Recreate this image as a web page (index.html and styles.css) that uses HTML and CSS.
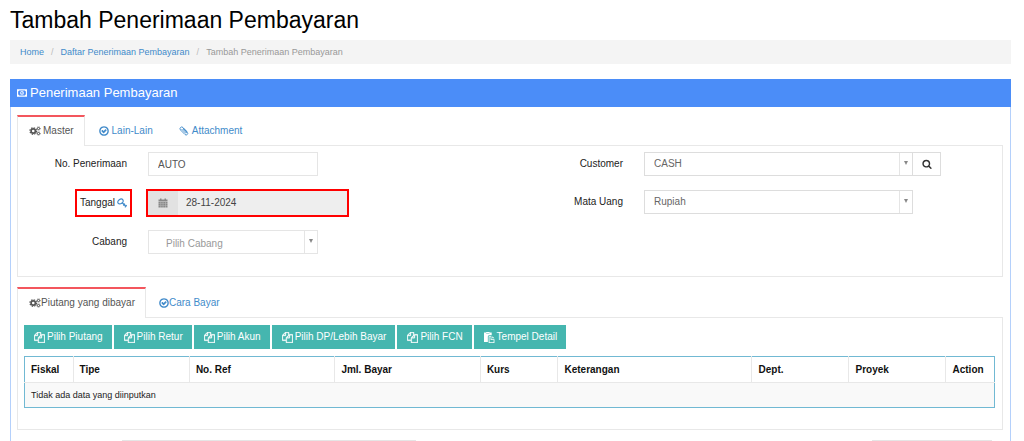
FILE: index.html
```html
<!DOCTYPE html>
<html lang="id">
<head>
<meta charset="utf-8">
<title>Tambah Penerimaan Pembayaran</title>
<link rel="stylesheet" href="styles.css">
</head>
<body>
<svg class="sprite" aria-hidden="true">
  <symbol id="i-money" viewBox="0 0 22 18"><path fill-rule="evenodd" d="M0 1h22v16H0zM4.500 3.500a2.500 2.500 0 0 1-2 2v7a2.500 2.500 0 0 1 2 2h13a2.500 2.500 0 0 1 2-2v-7a2.500 2.500 0 0 1-2-2zM11 4.500a4 4.500 0 1 1 0 9a4 4.500 0 1 1 0-9zM10.500 6L9 7.500v1h1V11H9v1h4v-1h-1V6z"/></symbol>
  <symbol id="i-cogs" viewBox="0 0 22 20"><g fill="none" stroke="currentColor"><circle cx="7.500" cy="10" r="4.300" stroke-width="3.400"/><circle cx="7.500" cy="10" r="6.600" stroke-width="2.400" stroke-dasharray="2.900 2.284"/><circle cx="18" cy="5" r="2.200" stroke-width="2"/><circle cx="18" cy="5" r="3.500" stroke-width="1.400" stroke-dasharray="1.600 1.542"/><circle cx="18" cy="15" r="2.200" stroke-width="2"/><circle cx="18" cy="15" r="3.500" stroke-width="1.400" stroke-dasharray="1.600 1.542"/></g></symbol>
  <symbol id="i-check" viewBox="100 100 1592 1592"><path d="M1299 813l-422 422q-19 19-45 19t-45-19l-294-294q-19-19-19-45t19-45l102-102q19-19 45-19t45 19l147 147 275-275q19-19 45-19t45 19l102 102q19 19 19 45t-19 45zm141 83q0-148-73-273t-198-198-273-73-273 73-198 198-73 273 73 273 198 198 273 73 273-73 198-198 73-273zm224 0q0 209-103 385.500t-279.500 279.500-385.500 103-385.500-103-279.500-279.500-103-385.500 103-385.500 279.500-279.500 385.500-103 385.500 103 279.500 279.500 103 385.500z"/></symbol>
  <symbol id="i-clip" viewBox="0 0 20 20"><path fill="none" stroke="currentColor" stroke-width="1.800" stroke-linecap="round" d="M8 4l8.500 8.500a3 3 0 0 1-4.500 4.500L3 8a3.500 3.500 0 0 1 5-5l7.500 7.500M5.500 6.500l7.500 7.500a1.300 1.300 0 0 0 1.800-1.800L8.500 6"/></symbol>
  <symbol id="i-key" viewBox="0 0 20 20"><g fill="none" stroke="currentColor" stroke-width="2.400"><ellipse cx="7" cy="7" rx="5.800" ry="4.400" transform="rotate(-35 7 7)"/><path d="M10 9l8.500 8.500M12.500 15l3.500-3.500M15.500 18.500l4-4"/></g></symbol>
  <symbol id="i-calendar" viewBox="0 0 20 20"><path fill-rule="evenodd" d="M1 3h3V1h3v2h6V1h3v2h3v4H1zM1 8h18v11H1zM5.500 8v11h.7V8zM9.700 8v11h.7V8zM14 8v11h.7V8zM1 11.500v.7h18v-.7zM1 15v.7h18V15z"/></symbol>
  <symbol id="i-search" viewBox="0 0 1792 1792"><path d="M1216 832q0-185-131.500-316.500t-316.500-131.500-316.500 131.500-131.500 316.500 131.500 316.500 316.500 131.500 316.500-131.500 131.500-316.500zm512 832q0 52-38 90t-90 38q-54 0-90-38l-343-342q-179 124-399 124-143 0-273.500-55.500t-225-150-150-225-55.500-273.500 55.500-273.500 150-225 225-150 273.500-55.500 273.500 55.500 225 150 150 225 55.500 273.500q0 220-124 399l343 343q37 37 37 90z"/></symbol>
  <symbol id="i-files" viewBox="0 0 1792 1792"><path stroke="currentColor" stroke-width="50" d="M1696 384q40 0 68 28t28 68v1216q0 40-28 68t-68 28h-960q-40 0-68-28t-28-68v-288h-544q-40 0-68-28t-28-68v-672q0-40 20-88t48-76l408-408q28-28 76-48t88-20h416q40 0 68 28t28 68v328q68-40 128-40h416zm-544 213l-299 299h299v-299zm-640-384l-299 299h299v-299zm196 647l316-316v-416h-384v416q0 40-28 68t-68 28h-416v640h512v-256q0-40 20-88t48-76zm956 804v-1152h-384v416q0 40-28 68t-68 28h-416v640h896z"/></symbol>
  <symbol id="i-paste" viewBox="0 0 20 20"><path fill-rule="evenodd" d="M0 1h4V0h6v1h4v5H8.500L7 7.500V18H0zM4 2.500v1h6v-1zM8.500 7.500h5V13H19v7H8.500zM10 9v9.500h7.500v-4H12V9zM15 7.500l4 4h-4z"/></symbol>
</svg>

<h1 class="page-title">Tambah Penerimaan Pembayaran</h1>
<nav class="breadcrumb" aria-label="Breadcrumb">
  <a href="#">Home</a><span class="sep">/</span><a href="#">Daftar Penerimaan Pembayaran</a><span class="sep">/</span><span>Tambah Penerimaan Pembayaran</span>
</nav>

<main class="portlet">
  <h2 class="portlet-title"><svg class="icon"><use href="#i-money"/></svg>Penerimaan Pembayaran</h2>
  <div class="portlet-body">
    <section>
      <nav class="tabs">
        <a class="tab active" href="#"><svg class="icon icon-wide"><use href="#i-cogs"/></svg>Master</a>
        <a class="tab" href="#"><svg class="icon"><use href="#i-check"/></svg>Lain-Lain</a>
        <a class="tab" href="#"><svg class="icon"><use href="#i-clip"/></svg>Attachment</a>
      </nav>
      <form class="tab-content master">
        <div class="column">
          <div class="field">
            <label for="no"><span class="label-text">No. Penerimaan</span></label>
            <input class="control short" id="no" value="AUTO">
          </div>
          <div class="field">
            <label for="tanggal"><span class="label-text marked">Tanggal <svg class="icon key"><use href="#i-key"/></svg></span></label>
            <div class="date marked">
              <span class="addon"><svg class="icon"><use href="#i-calendar"/></svg></span>
              <input class="date-input" id="tanggal" value="28-11-2024" readonly>
            </div>
          </div>
          <div class="field">
            <label for="cabang"><span class="label-text">Cabang</span></label>
            <div class="select short placeholder"><select class="control" id="cabang"><option>Pilih Cabang</option></select></div>
          </div>
        </div>
        <div class="column">
          <div class="field">
            <label for="customer"><span class="label-text">Customer</span></label>
            <div class="lookup">
              <div class="select long"><select class="control" id="customer"><option>CASH</option></select></div>
              <button class="search" type="button" aria-label="Cari"><svg class="icon"><use href="#i-search"/></svg></button>
            </div>
          </div>
          <div class="field">
            <label for="mata"><span class="label-text">Mata Uang</span></label>
            <div class="select long"><select class="control" id="mata"><option>Rupiah</option></select></div>
          </div>
        </div>
      </form>
    </section>

    <section>
      <nav class="tabs">
        <a class="tab tight active" href="#"><svg class="icon icon-wide"><use href="#i-cogs"/></svg>Piutang yang dibayar</a>
        <a class="tab tight" href="#"><svg class="icon"><use href="#i-check"/></svg>Cara Bayar</a>
      </nav>
      <div class="tab-content detail">
        <div class="toolbar">
          <button class="btn" type="button"><svg class="icon"><use href="#i-files"/></svg>Pilih Piutang</button>
          <button class="btn" type="button"><svg class="icon"><use href="#i-files"/></svg>Pilih Retur</button>
          <button class="btn" type="button"><svg class="icon"><use href="#i-files"/></svg>Pilih Akun</button>
          <button class="btn" type="button"><svg class="icon"><use href="#i-files"/></svg>Pilih DP/Lebih Bayar</button>
          <button class="btn" type="button"><svg class="icon"><use href="#i-files"/></svg>Pilih FCN</button>
          <button class="btn" type="button"><svg class="icon"><use href="#i-paste"/></svg>Tempel Detail</button>
        </div>
        <table class="grid">
          <colgroup><col class="w5"><col class="w12"><col class="w15"><col class="w15"><col class="w8"><col class="w20"><col class="w10"><col class="w10"><col class="w5"></colgroup>
          <thead><tr><th>Fiskal</th><th>Tipe</th><th>No. Ref</th><th>Jml. Bayar</th><th>Kurs</th><th>Keterangan</th><th>Dept.</th><th>Proyek</th><th>Action</th></tr></thead>
          <tbody><tr><td colspan="9">Tidak ada data yang diinputkan</td></tr></tbody>
        </table>
      </div>
    </section>

    <div class="summary">
      <textarea class="control note" aria-label="Catatan"></textarea>
      <input class="control total" aria-label="Total">
    </div>
  </div>
</main>
</body>
</html>
```
FILE: styles.css
```css
* { box-sizing: border-box; }

body {
  margin: 0;
  padding: 6px 13px 0 10px;
  background: #fff;
  color: #222;
  font: 10px/14px "Liberation Sans", Arial, sans-serif;
}

input, select, textarea, button { font: inherit; color: inherit; border-radius: 0; margin: 0; }
a { color: #428bca; text-decoration: none; }

.sprite { position: absolute; width: 0; height: 0; }
.icon { width: 10px; height: 10px; fill: currentColor; flex: none; }
.icon-wide { width: 12px; }

.page-title { margin: 0 0 6px; font-size: 23px; line-height: 28px; font-weight: 400; color: #000; }

.breadcrumb {
  display: flex;
  gap: 7px;
  align-items: center;
  height: 24px;
  padding: 0 10px;
  margin-bottom: 15px;
  background: #f4f4f4;
  color: #999;
  font-size: 9px;
}
.sep { color: #bbb; }

.portlet { border: 1px solid #b4d0fb; border-top: 0; }
.portlet-title {
  display: flex;
  align-items: center;
  gap: 3px;
  height: 28px;
  margin: 0 -1px;
  padding: 0 7px;
  background: #4b8df8;
  color: #fff;
  font-size: 13px;
  font-weight: 400;
}
.portlet-body { display: flex; flex-direction: column; gap: 10px; padding: 8px 7px 12px 6px; }

.tabs { display: flex; gap: 2px; }
.tab {
  display: flex;
  align-items: center;
  gap: 3px;
  height: 30px;
  padding: 0 11px;
  border: 1px solid transparent;
  border-width: 2px 1px 0;
}
.tab.tight { gap: 0; padding: 0 10px; }
.tab.active {
  height: 31px;
  margin-bottom: -1px;
  padding: 0 10px 1px 11px;
  border-color: #f3565d #e8e8e8 #fff;
  background: #fff;
  color: #555;
}
.tab.active:not(.tight) { gap: 2px; }
.tab-content { border: 1px solid #e8e8e8; }

.master { display: grid; grid-template-columns: 1fr 1fr; gap: 8px; padding: 6px 0 22px; }
.column { display: flex; flex-direction: column; gap: 14px; }
.field { display: grid; grid-template-columns: 112px 1fr; gap: 18px; align-items: center; }
.field label { display: flex; justify-content: flex-end; }
.label-text { display: flex; align-items: center; gap: 2px; height: 24px; padding: 0 3px; }
.marked { outline: 2px solid #f00; }
.key { color: #428bca; }

.control {
  width: 100%;
  height: 24px;
  padding: 0 9px;
  border: 1px solid #e5e5e5;
  background: #fff;
  color: #555;
  outline: 0;
}
.short { width: 170px; }
.long { width: 269px; }

.date { display: flex; width: 199px; height: 24px; margin: 1px 0; background: #eee; color: #444; }
.addon { display: grid; place-items: center; width: 30px; background: #e2e2e2; color: #888; }
.date-input { flex: 1; min-width: 0; padding: 0 8px; border: 0; background: none; outline: 0; }

.select { position: relative; }
.select .control {
  display: block;
  appearance: none;
  border-color: #ddd;
  background: linear-gradient(#e5e5e5, #e5e5e5) right 12px top / 1px 100% no-repeat #fff;
  color: #666;
}
.select::after {
  content: "";
  position: absolute;
  top: 9px;
  right: 5px;
  border: 2px solid transparent;
  border-top: 4px solid #888;
  border-bottom: 0;
  pointer-events: none;
}
.select.placeholder .control { padding: 3px 17px 0; border-color: #e5e5e5; color: #999; }

.lookup { display: flex; }
.search {
  display: grid;
  place-items: center;
  width: 28px;
  height: 24px;
  padding: 0;
  border: 1px solid #ddd;
  border-left: 0;
  background: #fff;
  color: #333;
}

.detail { padding: 7px 7px 21px 6px; }
.toolbar { display: flex; flex-wrap: wrap; gap: 2px; margin-bottom: 7px; }
.btn {
  display: flex;
  align-items: center;
  gap: 2px;
  height: 24px;
  padding: 0 9px 0 10px;
  border: 0;
  background: #45b6af;
  color: #fff;
}
.btn .icon { width: 11px; height: 11px; }

.grid { width: 100%; table-layout: fixed; border-collapse: collapse; border: 1px solid #71b9d3; }
.grid th, .grid td { padding: 5px 6px; text-align: left; }
.grid th { padding-top: 6px; border: 1px solid #e8e8e8; border-top-color: #71b9d3; color: #111; }
.grid th:first-child { border-left-color: #71b9d3; }
.grid th:last-child { border-right-color: #71b9d3; }
.grid td { background: #f9f9f9; font-size: 9px; }
.w5 { width: 5%; }
.w8 { width: 8%; }
.w10 { width: 10%; }
.w12 { width: 12%; }
.w15 { width: 15%; }
.w20 { width: 20%; }

.summary { display: flex; justify-content: space-between; padding: 0 11px 0 105px; }
.note { width: 294px; height: 48px; resize: none; }
.total { width: 120px; }
```
